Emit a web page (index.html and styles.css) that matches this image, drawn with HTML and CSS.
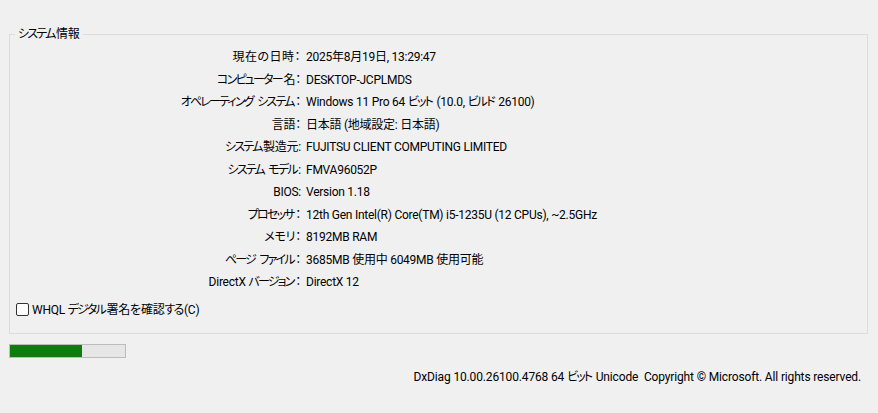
FILE: index.html
```html
<!DOCTYPE html>
<html lang="ja">
<head>
<meta charset="utf-8">
<link rel="stylesheet" href="styles.css">
</head>
<body>
<div class="page">
  <fieldset class="group">
    <legend class="legend"><span class="k">システム</span>情報</legend>
    <div class="info">
      <div class="lbl wide">現在の日時：</div><div class="val">2025年8月19日, 13:29:47</div>
      <div class="lbl"><span class="k">コンピューター</span>名：</div><div class="val">DESKTOP-JCPLMDS</div>
      <div class="lbl"><span class="k">オペレーティング</span> <span class="k">システム</span>：</div><div class="val">Windows 11 Pro 64 <span class="k">ビット</span> (10.0, <span class="k">ビルド</span> 26100)</div>
      <div class="lbl">言語：</div><div class="val">日本語 (地域設定: 日本語)</div>
      <div class="lbl"><span class="k">システム</span>製造元:</div><div class="val">FUJITSU CLIENT COMPUTING LIMITED</div>
      <div class="lbl"><span class="k">システム</span> <span class="k">モデル</span>:</div><div class="val">FMVA96052P</div>
      <div class="lbl">BIOS:</div><div class="val">Version 1.18</div>
      <div class="lbl"><span class="k">プロセッサ</span>：</div><div class="val">12th Gen Intel(R) Core(TM) i5-1235U (12 CPUs), ~2.5GHz</div>
      <div class="lbl">メモリ：</div><div class="val">8192MB RAM</div>
      <div class="lbl"><span class="k">ページ</span> <span class="k">ファイル</span>：</div><div class="val">3685MB 使用中 6049MB 使用可能</div>
      <div class="lbl">DirectX <span class="k">バージョン</span>：</div><div class="val">DirectX 12</div>
    </div>
    <label class="check"><span class="box"></span><span>WHQL <span class="k">デジタル</span>署名<span class="k">を</span>確認<span class="k">する</span>(C)</span></label>
  </fieldset>
  <div class="progress"><div class="fill" style="width:63%"></div></div>
  <div class="footer">DxDiag 10.00.26100.4768 64 <span class="k">ビット</span> Unicode&nbsp; Copyright © Microsoft. All rights reserved.</div>
</div>
</body>
</html>
```
FILE: styles.css
```css
html, body {
  margin: 0;
  padding: 0;
  background: #f0f0f0;
}
body {
  font-family: Roboto, "Noto Sans CJK JP", sans-serif;
  font-feature-settings: "palt";
  font-size: 12px;
  letter-spacing: -0.25px;
  color: #000;
  width: 878px;
  height: 413px;
  overflow: hidden;
}
.k {
  letter-spacing: -1.8px;
  padding-right: 1.6px;
}
.page {
  padding-top: 26px;
}
.group {
  margin: 0 10px 0 9px;
  padding: 0;
  border: 1px solid #dcdcdc;
  height: 308px;
  box-sizing: border-box;
  min-width: 0;
}
.legend {
  margin-left: 5px;
  padding: 0 3px;
  line-height: 16px;
  color: #000;
}
.info {
  display: grid;
  grid-template-columns: 291px 1fr;
  column-gap: 5px;
  grid-auto-rows: 22.5px;
  padding-top: 4px;
}
.lbl, .val {
  line-height: 22.5px;
  white-space: nowrap;
}
.lbl {
  text-align: right;
}
.wide {
  letter-spacing: 0.5px;
}
.check {
  display: flex;
  align-items: center;
  gap: 3px;
  margin: 8px 0 0 6px;
  line-height: 16px;
}
.box {
  width: 11px;
  height: 11px;
  border: 1px solid #333;
  border-radius: 2px;
  background: #fff;
}
.progress {
  margin: 10px 0 0 9px;
  width: 115px;
  height: 12px;
  border: 1px solid #bcbcbc;
  background: #e6e6e6;
}
.fill {
  height: 100%;
  background: #107c10;
}
.footer {
  margin-top: 10px;
  padding-right: 17px;
  text-align: right;
  line-height: 18px;
  letter-spacing: -0.15px;
  white-space: nowrap;
}
```
